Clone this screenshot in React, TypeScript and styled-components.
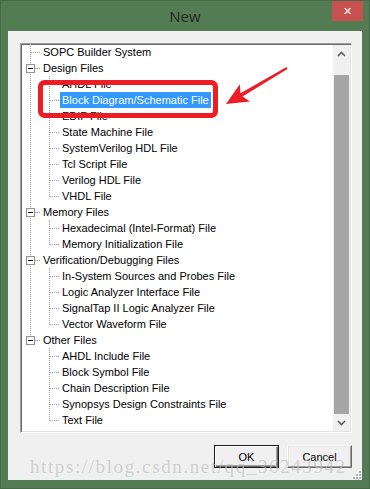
import React from "react";
import styled, { createGlobalStyle } from "styled-components";

const GlobalStyle = createGlobalStyle`
  html, body {
    margin: 0;
    padding: 0;
    background: #547c53;
  }
  * {
    box-sizing: border-box;
  }
`;

type CellKind = "pipe" | "tee" | "elbow" | "blank";

interface Cell {
  kind: CellKind;
  box?: boolean;
}

interface TreeRow {
  label: string;
  cells: Cell[];
  selected?: boolean;
}

const groups: { label: string; children?: string[] }[] = [
  { label: "SOPC Builder System" },
  {
    label: "Design Files",
    children: [
      "AHDL File",
      "Block Diagram/Schematic File",
      "EDIF File",
      "State Machine File",
      "SystemVerilog HDL File",
      "Tcl Script File",
      "Verilog HDL File",
      "VHDL File",
    ],
  },
  {
    label: "Memory Files",
    children: ["Hexadecimal (Intel-Format) File", "Memory Initialization File"],
  },
  {
    label: "Verification/Debugging Files",
    children: [
      "In-System Sources and Probes File",
      "Logic Analyzer Interface File",
      "SignalTap II Logic Analyzer File",
      "Vector Waveform File",
    ],
  },
  {
    label: "Other Files",
    children: [
      "AHDL Include File",
      "Block Symbol File",
      "Chain Description File",
      "Synopsys Design Constraints File",
      "Text File",
    ],
  },
];

const buildRows = (): TreeRow[] => {
  const rows: TreeRow[] = [];
  groups.forEach((group, i) => {
    const lastGroup = i === groups.length - 1;
    rows.push({
      label: group.label,
      cells: [{ kind: lastGroup ? "elbow" : "tee", box: !!group.children }],
    });
    (group.children || []).forEach((child, j, list) => {
      rows.push({
        label: child,
        cells: [
          { kind: lastGroup ? "blank" : "pipe" },
          { kind: j === list.length - 1 ? "elbow" : "tee" },
        ],
        selected: child === "Block Diagram/Schematic File",
      });
    });
  });
  return rows;
};

const Guide: React.FC<{ cell: Cell }> = ({ cell }) => {
  const dot = { stroke: "#a0a0a0", strokeWidth: 1, strokeDasharray: "1 1" };
  const { kind, box } = cell;
  return (
    <svg width="19" height="16" viewBox="0 0 19 16" shapeRendering="crispEdges">
      {(kind === "pipe" || kind === "tee") && <line x1="8.5" y1="0" x2="8.5" y2="16" {...dot} />}
      {kind === "elbow" && <line x1="8.5" y1="0" x2="8.5" y2="9" {...dot} />}
      {(kind === "tee" || kind === "elbow") && (
        <line x1={box ? 13 : 9} y1="8.5" x2="19" y2="8.5" {...dot} />
      )}
      {box && (
        <>
          <rect x="4.5" y="4.5" width="8" height="8" fill="#fff" stroke="#919191" />
          <line x1="6" y1="8.5" x2="11" y2="8.5" stroke="#000" />
        </>
      )}
    </svg>
  );
};

const Chevron: React.FC<{ down?: boolean }> = ({ down }) => (
  <svg width="9" height="6" viewBox="0 0 9 6">
    <polyline
      points={down ? "1,1 4.5,4.5 8,1" : "1,5 4.5,1.5 8,5"}
      fill="none"
      stroke="#606060"
      strokeWidth="1.6"
    />
  </svg>
);

const App: React.FC = () => {
  const rows = buildRows();

  return (
    <>
      <GlobalStyle />
      <Window>
        <TitleBar>
          <Title>New</Title>
          <CloseButton>✕</CloseButton>
        </TitleBar>
        <Client>
          <TreeBox>
            <TreeList>
              {rows.map((row) => (
                <Row key={row.label}>
                  {row.cells.map((cell, i) => (
                    <Guide key={i} cell={cell} />
                  ))}
                  <Label $selected={row.selected}>{row.label}</Label>
                </Row>
              ))}
            </TreeList>
            <ScrollBar>
              <ArrowButton>
                <Chevron />
              </ArrowButton>
              <Track>
                <Thumb />
              </Track>
              <ArrowButton>
                <Chevron down />
              </ArrowButton>
            </ScrollBar>
          </TreeBox>
          <ButtonRow>
            <DialogButton $default>OK</DialogButton>
            <DialogButton>Cancel</DialogButton>
          </ButtonRow>
          <Grip width="10" height="10" viewBox="0 0 10 10">
            {[
              [8, 2], [8, 5], [5, 5], [8, 8], [5, 8], [2, 8],
            ].map(([x, y]) => (
              <rect key={`${x}-${y}`} x={x} y={y} width="2" height="2" fill="#b5b5b5" />
            ))}
          </Grip>
        </Client>
        <Annotation viewBox="0 0 370 489" width="370" height="489">
          <rect x="39.5" y="81.5" width="175" height="33" rx="4" fill="none" stroke="#ee1c24" strokeWidth="5" />
          <polygon
            points="225,103 238.8,83.2 239.5,92.2 285.5,66.1 286.5,67.9 241.5,95.6 249,100.4"
            fill="#ee1c24"
          />
        </Annotation>
        <Watermark>https://blog.csdn.net/qq_36243942</Watermark>
      </Window>
    </>
  );
};

const Window = styled.div`
  position: relative;
  width: 370px;
  height: 489px;
  background: #547c53;
  border: 1px solid #466a45;
  display: flex;
  flex-direction: column;
  padding: 0 7px 8px 7px;
  overflow: hidden;
`;

const TitleBar = styled.div`
  height: 30px;
  display: flex;
  align-items: center;
  justify-content: center;
  position: relative;
`;

const Title = styled.div`
  font-family: "Open Sans", "Noto Sans", sans-serif;
  font-size: 15px;
  color: #262626;
  margin-top: -1px;
`;

const CloseButton = styled.div`
  position: absolute;
  top: 0;
  right: -1px;
  width: 31px;
  height: 20px;
  background: #c75050;
  color: #fff;
  font-family: "DejaVu Sans", sans-serif;
  font-size: 11px;
  font-weight: bold;
  display: flex;
  align-items: center;
  justify-content: center;
`;

const Client = styled.div`
  position: relative;
  flex: 1;
  background: #f0f0f0;
  display: flex;
  flex-direction: column;
  padding: 12px 10px 0 12px;
`;

const TreeBox = styled.div`
  width: 332px;
  height: 390px;
  display: flex;
  background: #fff;
  border-top: 1px solid #a0a0a0;
  border-left: 1px solid #a0a0a0;
  border-right: 1px solid #fff;
  border-bottom: 1px solid #fff;
  box-shadow: inset 1px 1px 0 #696969, inset -1px -1px 0 #e3e3e3;
  padding: 0 1px 1px 1px;
`;

const TreeList = styled.div`
  flex: 1;
  display: flex;
  flex-direction: column;
  overflow: hidden;
`;

const Row = styled.div`
  display: flex;
  align-items: center;
  height: 16px;
  flex-shrink: 0;
`;

const Label = styled.span<{ $selected?: boolean }>`
  font-family: "Liberation Sans", Arial, sans-serif;
  font-size: 11px;
  line-height: 16px;
  height: 16px;
  padding: 0 2px;
  color: ${(p) => (p.$selected ? "#fff" : "#000")};
  background: ${(p) => (p.$selected ? "#3399ff" : "transparent")};
  white-space: nowrap;
`;

const ScrollBar = styled.div`
  width: 17px;
  margin-top: 1px;
  display: flex;
  flex-direction: column;
  background: #f0f0f0;
`;

const ArrowButton = styled.div`
  height: 17px;
  display: flex;
  align-items: center;
  justify-content: center;
`;

const Track = styled.div`
  flex: 1;
  display: flex;
  flex-direction: column;
  padding: 13px 1px 0 1px;
`;

const Thumb = styled.div`
  flex: 1;
  background: #a6a6a6;
`;

const ButtonRow = styled.div`
  display: flex;
  justify-content: flex-end;
  gap: 8px;
  margin-top: 12px;
`;

const DialogButton = styled.div<{ $default?: boolean }>`
  width: 65px;
  height: 23px;
  display: flex;
  align-items: center;
  justify-content: center;
  font-family: "Liberation Sans", Arial, sans-serif;
  font-size: 11px;
  color: #000;
  background: #f0f0f0;
  border: 1px solid ${(p) => (p.$default ? "#1a1a1a" : "#696969")};
  border-top-color: ${(p) => (p.$default ? "#1a1a1a" : "#fff")};
  border-left-color: ${(p) => (p.$default ? "#1a1a1a" : "#fff")};
  box-shadow: ${(p) =>
    p.$default
      ? "inset 1px 1px 0 #fff, inset -1px -1px 0 #696969, inset -2px -2px 0 #a0a0a0"
      : "inset -1px -1px 0 #a0a0a0, inset 1px 1px 0 #e3e3e3"};
`;

const Grip = styled.svg`
  position: absolute;
  right: 1px;
  bottom: 1px;
`;

const Annotation = styled.svg`
  position: absolute;
  left: 0;
  top: 0;
  pointer-events: none;
`;

const Watermark = styled.div`
  position: absolute;
  left: 29px;
  top: 455px;
  font-family: "Liberation Serif", "Times New Roman", serif;
  font-size: 19px;
  letter-spacing: 1.6px;
  color: rgba(190, 190, 190, 0.65);
  white-space: nowrap;
  pointer-events: none;
`;

export default App;
